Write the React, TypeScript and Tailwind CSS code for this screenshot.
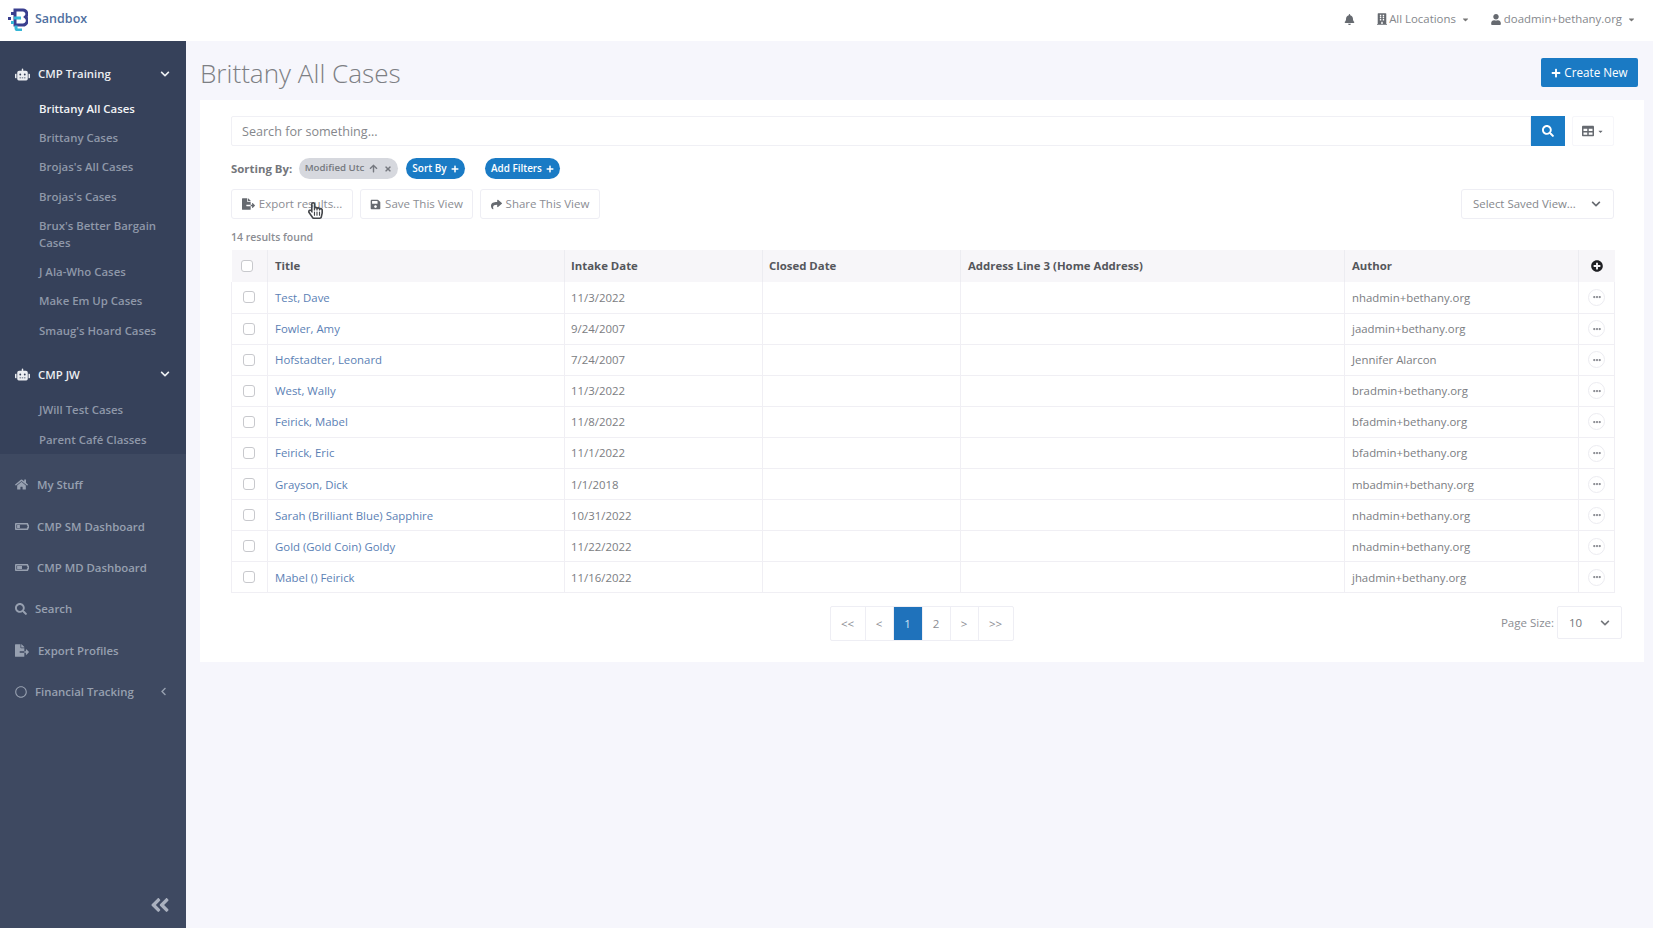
import {
  FaRobot, FaChevronDown, FaChevronLeft, FaHome, FaBatteryQuarter, FaBatteryHalf, FaSearch, FaFileExport,
  FaRegCircle, FaBell, FaBuilding, FaUser, FaPlus, FaTable, FaSave, FaShare, FaArrowUp, FaTimes,
  FaAngleDoubleLeft, FaEllipsisH, FaPlusCircle, FaRegHandPointer, FaCaretDown,
} from 'react-icons/fa'

const rows = [
  ['Test, Dave', '11/3/2022', 'nhadmin+bethany.org'],
  ['Fowler, Amy', '9/24/2007', 'jaadmin+bethany.org'],
  ['Hofstadter, Leonard', '7/24/2007', 'Jennifer Alarcon'],
  ['West, Wally', '11/3/2022', 'bradmin+bethany.org'],
  ['Feirick, Mabel', '11/8/2022', 'bfadmin+bethany.org'],
  ['Feirick, Eric', '11/1/2022', 'bfadmin+bethany.org'],
  ['Grayson, Dick', '1/1/2018', 'mbadmin+bethany.org'],
  ['Sarah (Brilliant Blue) Sapphire', '10/31/2022', 'nhadmin+bethany.org'],
  ['Gold (Gold Coin) Goldy', '11/22/2022', 'nhadmin+bethany.org'],
  ['Mabel () Feirick', '11/16/2022', 'jhadmin+bethany.org'],
]

const SubItem = ({ label, active }: { label: string; active?: boolean }) => (
  <div className={`flex min-h-[29.3px] items-center pl-[39px] pr-6 text-[11.4px] leading-[17.5px] font-semibold ${active ? 'text-[#f2f3f6]' : 'text-[#8f98a9]'}`}>
    <span className={label.startsWith('Brux') ? 'py-[5.5px]' : ''}>{label}</span>
  </div>
)

const Group = ({ label, children }: { label: string; children: React.ReactNode }) => (
  <div className="mb-[9px] last:mb-0">
    <div className="flex h-10 items-center pl-[15px] pr-[16px] text-[#eceef2]">
      <FaRobot className="h-[15px] w-[15px]" />
      <span className="ml-[8px] flex-1 text-[11.4px] font-semibold">{label}</span>
      <FaChevronDown className="h-[10px] w-[10px]" />
    </div>
    {children}
  </div>
)

const NavItem = ({ icon, label, gap, right }: { icon: React.ReactNode; label: string; gap: string; right?: boolean }) => (
  <div className="flex h-[41.4px] items-center pl-[15px] pr-[18px] text-[11.4px] font-semibold text-[#97a0b0]">
    {icon}
    <span className={`${gap} flex-1`}>{label}</span>
    {right && <FaChevronLeft className="h-[9px] w-[9px]" />}
  </div>
)

const OutlineButton = ({ icon, label, width }: { icon: React.ReactNode; label: string; width: string }) => (
  <div className={`flex h-[30px] items-center justify-center gap-[4px] rounded-[3px] border border-[#eeeef4] bg-white text-[11.5px] text-[#8b8d93] ${width}`}>
    {icon}
    <span>{label}</span>
  </div>
)

const PageButton = ({ label, active, width }: { label: string; active?: boolean; width: string }) => (
  <div className={`flex h-[33px] items-center justify-center border-r border-[#eeeef4] text-[11.5px] last:border-r-0 ${width} ${active ? 'bg-[#1f72bb] text-[#cfe3f5]' : 'text-[#8b8d93]'}`}>
    {label}
  </div>
)

const Checkbox = ({ shift }: { shift?: boolean }) => (
  <div className={`h-[12px] w-[12px] rounded-[3px] border border-[#c8c9cd] bg-white ${shift ? 'ml-[11px]' : 'ml-[9px]'}`} />
)

export default function App() {
  return (
    <div className="flex h-[928px] w-[1653px] flex-col overflow-hidden bg-[#f6f6fc] font-['Open_Sans',sans-serif]">
      {/* Top bar */}
      <header className="flex h-[41px] shrink-0 items-center bg-white pb-[3px] pl-[8px] pr-[17px]">
        <svg width="20" height="23" viewBox="0 0 20 23" fill="none">
          <path d="M7 2h8a4 4 0 0 1 2.5 7A4.5 4.5 0 0 1 14 17H7z" stroke="#3a3f8f" strokeWidth="3" />
          <path d="M6 10h7M8 17.5v2.5a2 2 0 0 0 2 2h4" stroke="#35b6d6" strokeWidth="3" />
          <rect x="0" y="9" width="3" height="3" fill="#3a3f8f" />
          <rect x="3" y="4" width="3" height="3" fill="#3a3f8f" />
          <rect x="3" y="13" width="3" height="3" fill="#35b6d6" />
        </svg>
        <span className="ml-[7px] flex-1 text-[12.5px] font-semibold text-[#4f6f9f]">Sandbox</span>
        <FaBell className="h-[11px] w-[11px] text-[#666a70]" />
        <FaBuilding className="ml-[22px] h-[12px] w-[10px] text-[#666a70]" />
        <span className="ml-[2px] text-[11.4px] text-[#85878c]">All Locations</span>
        <FaCaretDown className="ml-[5px] h-[9px] w-[9px] text-[#777]" />
        <FaUser className="ml-[21px] h-[11px] w-[10px] text-[#666a70]" />
        <span className="ml-[3px] text-[11.4px] text-[#85878c]">doadmin+bethany.org</span>
        <FaCaretDown className="ml-[5px] h-[9px] w-[9px] text-[#777]" />
      </header>

      <div className="flex min-h-0 flex-1">
        {/* Sidebar */}
        <aside className="flex w-[186px] shrink-0 flex-col bg-[#3e4961]">
          <div className="bg-[#36415a] pt-[13px]">
            <Group label="CMP Training">
              <SubItem label="Brittany All Cases" active />
              <SubItem label="Brittany Cases" />
              <SubItem label="Brojas's All Cases" />
              <SubItem label="Brojas's Cases" />
              <SubItem label="Brux's Better Bargain Cases" />
              <SubItem label="J Ala-Who Cases" />
              <SubItem label="Make Em Up Cases" />
              <SubItem label="Smaug's Hoard Cases" />
            </Group>
            <Group label="CMP JW">
              <div className="pt-[1.5px]">
                <SubItem label="JWill Test Cases" />
                <SubItem label="Parent Café Classes" />
              </div>
            </Group>
          </div>
          <div className="pt-[10px]">
            <NavItem icon={<FaHome className="h-[13px] w-[13px]" />} label="My Stuff" gap="ml-[9px]" />
            <NavItem icon={<FaBatteryQuarter className="h-[13px] w-[14px]" />} label="CMP SM Dashboard" gap="ml-[8px]" />
            <NavItem icon={<FaBatteryHalf className="h-[13px] w-[14px]" />} label="CMP MD Dashboard" gap="ml-[8px]" />
            <NavItem icon={<FaSearch className="h-[12px] w-[12px]" />} label="Search" gap="ml-[8px]" />
            <NavItem icon={<FaFileExport className="h-[13px] w-[14px]" />} label="Export Profiles" gap="ml-[9px]" />
            <NavItem icon={<FaRegCircle className="h-[12px] w-[12px]" />} label="Financial Tracking" gap="ml-[8px]" right />
          </div>
          <div className="mt-auto flex justify-end pb-[12px] pr-[15px]">
            <FaAngleDoubleLeft className="h-[22px] w-[22px] text-[#aab1bf]" />
          </div>
        </aside>

        {/* Main */}
        <main className="min-w-0 flex-1 pl-[14px] pr-[9px]">
          <div className="flex h-[59px] items-center justify-between pr-[6px] pt-[4px]">
            <h1 className="mt-[3px] text-[26.1px] font-light text-[#7d7f84]">Brittany All Cases</h1>
            <div className="flex h-[29px] w-[97px] items-center justify-center gap-[3px] rounded-[2px] bg-[#1a7ac4] text-[11.7px] text-white">
              <FaPlus className="h-[10px] w-[10px]" />
              <span>Create New</span>
            </div>
          </div>

          <section className="h-[562px] bg-white pl-[31px] pr-[30px] pt-[16px]">
            {/* Search */}
            <div className="flex h-[30px] items-stretch">
              <div className="flex flex-1 items-center rounded-l-[2px] border border-[#f0f0f5] pl-[10px] pt-[3px] text-[12.6px] text-[#85878c]">
                Search for something...
              </div>
              <div className="flex w-[34px] items-center justify-center bg-[#1a7bc5] text-white">
                <FaSearch className="h-[12px] w-[12px]" />
              </div>
              <div className="ml-[7px] flex w-[42px] items-center justify-center gap-[3px] rounded-[2px] border border-[#f6f6fa] text-[#666a70]">
                <FaTable className="h-[12px] w-[12px]" />
                <FaCaretDown className="h-[7px] w-[7px]" />
              </div>
            </div>

            {/* Sorting */}
            <div className="mt-[12px] flex h-[21px] items-center">
              <span className="w-[68px] text-[11.4px] font-bold text-[#74767b]">Sorting By:</span>
              <div className="flex h-[21px] w-[99px] items-center justify-center rounded-full bg-[#d6d8de] text-[9.7px] font-semibold text-[#75787f]">
                <span>Modified Utc</span>
                <FaArrowUp className="ml-[5px] h-[9px] w-[9px]" />
                <FaTimes className="ml-[6px] h-[8px] w-[8px]" />
              </div>
              <div className="ml-[8px] flex h-[21px] w-[59px] items-center justify-center gap-[4px] rounded-full bg-[#1a7bc5] text-[10px] font-semibold text-white">
                <span>Sort By</span>
                <FaPlus className="h-[8px] w-[8px]" />
              </div>
              <div className="ml-[20px] flex h-[21px] w-[75px] items-center justify-center gap-[4px] rounded-full bg-[#1a7bc5] text-[9.9px] font-semibold text-white">
                <span>Add Filters</span>
                <FaPlus className="h-[8px] w-[8px]" />
              </div>
            </div>

            {/* Actions */}
            <div className="mt-[10px] flex items-center gap-[7px]">
              <div className="relative">
                <OutlineButton width="w-[122px]" icon={<FaFileExport className="h-[12px] w-[13px] text-[#666a70]" />} label="Export results..." />
                <FaRegHandPointer className="absolute left-[77px] top-[12px] h-[19px] w-[15px] text-[#44464a]" />
              </div>
              <OutlineButton width="w-[113px]" icon={<FaSave className="h-[11px] w-[11px] text-[#666a70]" />} label="Save This View" />
              <OutlineButton width="w-[120px]" icon={<FaShare className="h-[11px] w-[11px] text-[#666a70]" />} label="Share This View" />
              <div className="ml-auto flex h-[30px] w-[153px] items-center justify-between rounded-[3px] border border-[#eeeef4] pl-[11px] pr-[12px] text-[11.4px] text-[#85878c]">
                <span>Select Saved View...</span>
                <FaChevronDown className="h-[10px] w-[10px] text-[#666a70]" />
              </div>
            </div>

            <div className="mt-[10px] h-[17px] text-[10.5px] font-semibold leading-[17px] text-[#8b8d93]">14 results found</div>

            {/* Results table */}
            <table className="mt-[4px] w-[1383px] table-fixed border-collapse text-[11.4px]">
              <colgroup>
                <col className="w-[36px]" />
                <col className="w-[297px]" />
                <col className="w-[198px]" />
                <col className="w-[198px]" />
                <col className="w-[384px]" />
                <col className="w-[234px]" />
                <col className="w-[36px]" />
              </colgroup>
              <thead>
                <tr className="h-[32px] bg-[#f7f6f9] text-left font-bold text-[#55575c]">
                  <th className="border-r border-[#ececf1]"><Checkbox /></th>
                  <th className="border-r border-[#ececf1] pl-[7px] font-bold">Title</th>
                  <th className="border-r border-[#ececf1] pl-[6px] font-bold">Intake Date</th>
                  <th className="border-r border-[#ececf1] pl-[6px] font-bold">Closed Date</th>
                  <th className="border-r border-[#ececf1] pl-[7px] font-bold">Address Line 3 (Home Address)</th>
                  <th className="border-r border-[#ececf1] pl-[7px] font-bold">Author</th>
                  <th><FaPlusCircle className="mx-auto h-[12px] w-[12px] text-[#1f2024]" /></th>
                </tr>
              </thead>
              <tbody>
                {rows.map(([title, intake, author]) => (
                  <tr key={title} className="h-[31.1px] border-b border-[#f0eff4] text-[#7b7d82]">
                    <td className="border-x border-[#f0eff4]"><Checkbox shift /></td>
                    <td className="border-r border-[#f0eff4] pl-[7px] text-[#5b7fb5]">{title}</td>
                    <td className="border-r border-[#f0eff4] pl-[6px]">{intake}</td>
                    <td className="border-r border-[#f0eff4]" />
                    <td className="border-r border-[#f0eff4]" />
                    <td className="border-r border-[#f0eff4] pl-[7px]">{author}</td>
                    <td className="border-r border-[#f0eff4]">
                      <div className="mx-auto flex h-[17px] w-[17px] items-center justify-center rounded-full border border-[#ececf1]">
                        <FaEllipsisH className="h-[8px] w-[8px] text-[#8b8d93]" />
                      </div>
                    </td>
                  </tr>
                ))}
              </tbody>
            </table>

            {/* Pagination */}
            <div className="relative mt-[13px] flex justify-center pr-[2px]">
              <div className="flex overflow-hidden rounded-[2px] border border-[#eeeef4]">
                <PageButton label="<<" width="w-[35px]" />
                <PageButton label="<" width="w-[28px]" />
                <PageButton label="1" active width="w-[29px]" />
                <PageButton label="2" width="w-[28px]" />
                <PageButton label=">" width="w-[28px]" />
                <PageButton label=">>" width="w-[34px]" />
              </div>
              <div className="absolute right-[-8px] top-0 flex items-center">
                <span className="text-[11.5px] text-[#8b8d93]">Page Size:</span>
                <div className="ml-[3px] flex h-[33px] w-[65px] items-center justify-between rounded-[2px] border border-[#eeeef4] pl-[11px] pr-[11px] text-[11.5px] text-[#75777c]">
                  <span>10</span>
                  <FaChevronDown className="h-[10px] w-[10px]" />
                </div>
              </div>
            </div>
          </section>
        </main>
      </div>
    </div>
  )
}
